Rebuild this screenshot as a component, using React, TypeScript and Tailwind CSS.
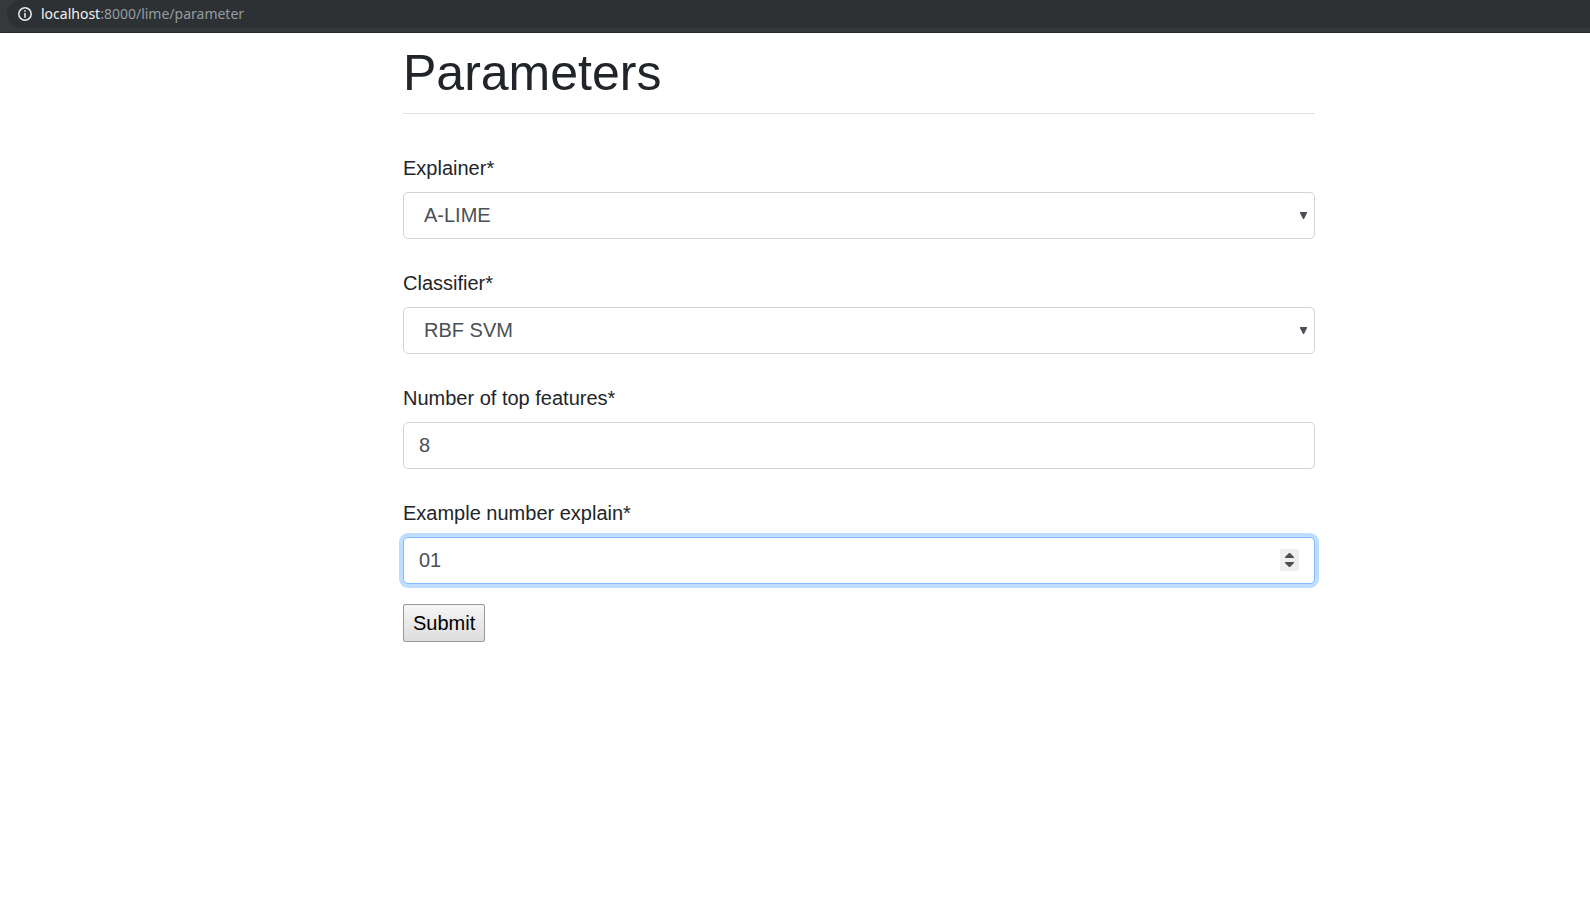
import { useState } from "react";
import type { ReactNode } from "react";

const control =
  "block h-[47px] w-full appearance-none rounded-[5px] border bg-white text-xl leading-[30px] text-[#495057] outline-none";

function Field({ id, label, children }: { id: string; label: string; children: ReactNode }) {
  return (
    <div className="flex flex-col gap-[10px]">
      <label htmlFor={id} className="text-xl leading-7">
        {label}
      </label>
      <div className="relative">{children}</div>
    </div>
  );
}

function SelectField({ id, label, options }: { id: string; label: string; options: string[] }) {
  return (
    <Field id={id} label={label}>
      <select id={id} name={id} defaultValue={options[0]} className={`${control} border-[#ced4da] px-5 pb-[2px]`}>
        {options.map((option) => (
          <option key={option}>{option}</option>
        ))}
      </select>
      <svg
        aria-hidden="true"
        viewBox="0 0 7 7"
        className="pointer-events-none absolute right-2 top-5 h-[7px] w-[7px]"
        fill="#495057"
      >
        <path d="M0 0h7v1L4 7H3L0 1z" />
      </svg>
    </Field>
  );
}

function AddressBar() {
  return (
    <header className="h-[33px] border-b border-[#25282b] bg-[#35393c] pl-[7px]">
      <div className="flex h-7 items-center gap-[9px] rounded-bl-full rounded-tl-full bg-[#2d3134] pl-[11px] font-['Noto_Sans',sans-serif] text-sm text-[#969ba0]">
        <svg aria-hidden="true" viewBox="0 0 14 14" className="h-[14px] w-[14px]" fill="none">
          <circle cx="7" cy="7" r="6.2" stroke="#e8eaed" strokeWidth="1.5" />
          <path d="M6.2 3.3h1.6v1.5H6.2zM6.2 6h1.6v4.7H6.2z" fill="#e8eaed" />
        </svg>
        <span>
          <span className="text-[#f1f3f4]">localhost</span>:8000/lime/parameter
        </span>
      </div>
    </header>
  );
}

export default function App() {
  const [example, setExample] = useState("01");
  const step = (delta: number) =>
    setExample((value) => String(Math.max(0, Number(value) + delta)).padStart(2, "0"));

  return (
    <div className="min-h-screen bg-white font-['Liberation_Sans',Arial,sans-serif] text-[#212529]">
      <AddressBar />
      <main className="pl-[403px] pr-[275px] pt-[10px]">
        <h1 className="border-b border-[#dee2e6] pb-[10px] text-[50px] leading-[60px]">Parameters</h1>
        <form className="pt-10" onSubmit={(event) => event.preventDefault()}>
          <div className="flex flex-col gap-[30px]">
            <SelectField id="explainer" label="Explainer*" options={["A-LIME", "LIME"]} />
            <SelectField id="classifier" label="Classifier*" options={["RBF SVM", "Random Forest"]} />
            <Field id="features" label="Number of top features*">
              <input
                id="features"
                type="number"
                defaultValue="8"
                className={`${control} border-[#ced4da] px-[15px] [appearance:textfield]`}
              />
            </Field>
            <Field id="example" label="Example number explain*">
              <input
                id="example"
                type="number"
                value={example}
                onChange={(event) => setExample(event.target.value)}
                className={`${control} border-[#80bdff] px-[15px] shadow-[0_0_0_4px_#bfdeff] [appearance:textfield]`}
              />
              <div className="absolute right-4 top-3 flex h-[22px] w-[19px] flex-col bg-[#efefef]">
                <button
                  type="button"
                  aria-label="Increase"
                  onClick={() => step(1)}
                  className="flex flex-1 items-end justify-center pb-[2px]"
                >
                  <svg viewBox="0 0 9 5" className="h-[5px] w-[9px]" fill="#505050">
                    <path d="M0 5V4L4 0h1l4 4v1z" />
                  </svg>
                </button>
                <button
                  type="button"
                  aria-label="Decrease"
                  onClick={() => step(-1)}
                  className="flex flex-1 items-start justify-center pt-[2px]"
                >
                  <svg viewBox="0 0 9 5" className="h-[5px] w-[9px]" fill="#505050">
                    <path d="M0 0v1l4 4h1l4-4V0z" />
                  </svg>
                </button>
              </div>
            </Field>
          </div>
          <button
            type="submit"
            className="mt-5 h-[38px] rounded-[2px] border border-[#999999] bg-linear-to-b from-[#f6f6f6] to-[#dddddd] px-[9px] text-xl leading-[30px] text-black"
          >
            Submit
          </button>
        </form>
      </main>
    </div>
  );
}
